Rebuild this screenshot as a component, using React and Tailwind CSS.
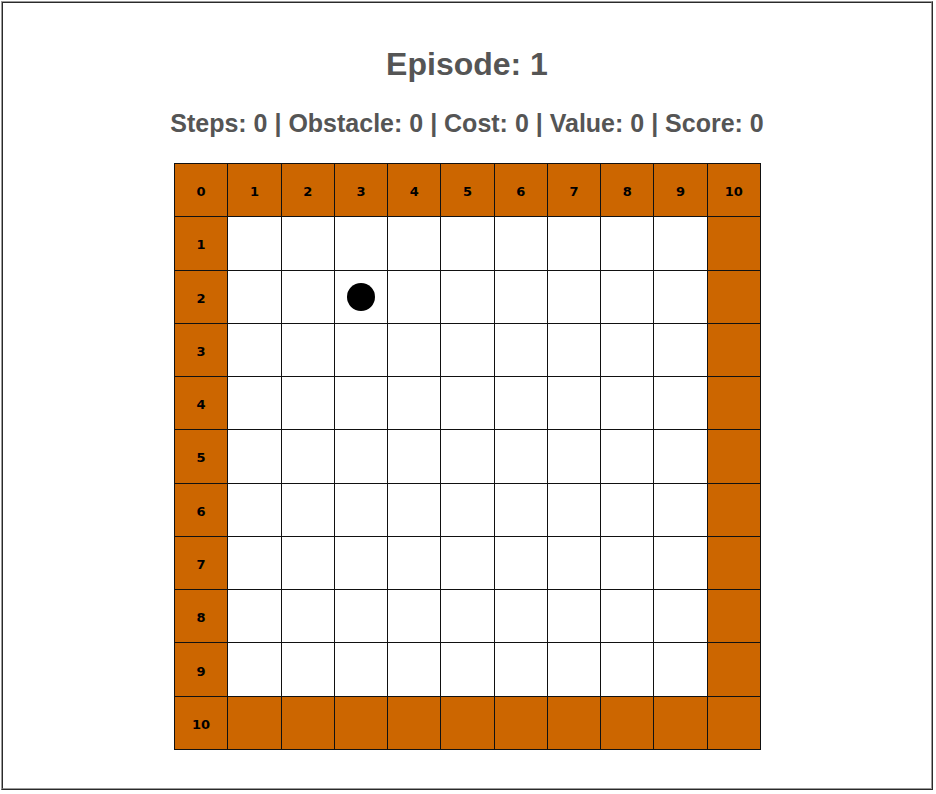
import React from "react";

const N = 11;

function Cell({ r, c }) {
  const border = r === 0 || c === 0 || r === N - 1 || c === N - 1;
  let label = null;
  if (r === 0) label = String(c);
  else if (c === 0) label = String(r);
  return (
    <div
      className={
        "flex items-center justify-center " +
        (border ? "bg-[#cc6600]" : "bg-white")
      }
    >
      {label !== null && (
        <span
          className="text-[13px] font-bold text-black leading-none mt-[3px]"
          style={{ fontFamily: '"DejaVu Sans", sans-serif' }}
        >
          {label}
        </span>
      )}
      {r === 2 && c === 3 && <div className="w-7 h-7 rounded-full bg-black" />}
    </div>
  );
}

export default function App() {
  const cells = [];
  for (let r = 0; r < N; r++) {
    for (let c = 0; c < N; c++) {
      cells.push(<Cell key={r + "-" + c} r={r} c={c} />);
    }
  }
  return (
    <div
      className="w-[936px] h-[794px] bg-white pl-px pt-px"
      style={{ fontFamily: '"Liberation Sans", Arial, sans-serif' }}
    >
      <div className="w-[932px] h-[789px] border border-t-[#9a9a9a] border-l-[#9a9a9a] border-b-[#2a2a2a] border-r-[#2a2a2a]">
        <div className="w-full h-full border border-t-[#2a2a2a] border-l-[#2a2a2a] border-b-[#9a9a9a] border-r-[#9a9a9a] flex flex-col items-center pt-[43px]">
          <h1 className="text-[32px] leading-[37px] font-bold text-[#555555]">Episode: 1</h1>
          <h2 className="mt-[26px] text-[25px] leading-[29px] font-bold text-[#555555]">
            Steps: 0 | Obstacle: 0 | Cost: 0 | Value: 0 | Score: 0
          </h2>
          <div className="mt-[25px] ml-px w-[587px] h-[587px] bg-[#111111] p-px grid grid-cols-11 grid-rows-11 gap-px">
            {cells}
          </div>
        </div>
      </div>
    </div>
  );
}
